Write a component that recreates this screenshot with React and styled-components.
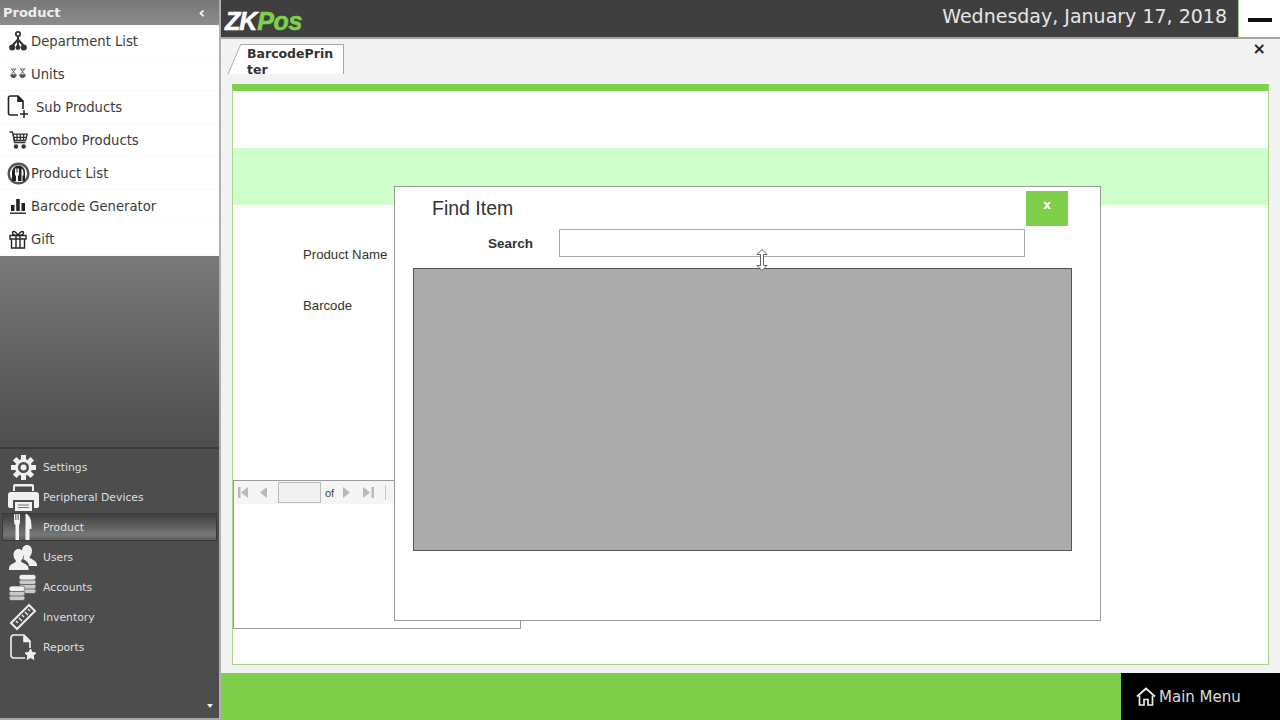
import React from 'react';
import styled, { createGlobalStyle } from 'styled-components';

const GlobalStyle = createGlobalStyle`
html, body { margin: 0; padding: 0; background: #f2f2f2; }
* { box-sizing: border-box; }
#root { width: 1280px; height: 720px; overflow: hidden; }
`;

const DeptIcon = () => (
    <svg width="18" height="22" viewBox="0 0 18 22" fill="none" stroke="#333" strokeWidth="1.7">
        <circle cx="9" cy="4" r="2.2" />
        <circle cx="3.2" cy="17.5" r="2.2" fill="#333" />
        <circle cx="14.8" cy="17.5" r="2.2" fill="#333" />
        <circle cx="9" cy="17.5" r="1.6" fill="#333" />
        <path d="M9 6v11M9 9.5L3.5 15.5M9 9.5l5.5 6" strokeWidth="2" />
    </svg>
);

const UnitsIcon = () => (
    <svg width="16" height="12" viewBox="0 0 16 12" fill="none" stroke="#555" strokeWidth=".9">
        <path d="M.8 1h5.400M1.500 1l3.800 5M5.500 1L1.700 6" />
        <path d="M9.800 1h5.400M10.500 1l3.800 5M14.500 1l-3.800 5" />
        <path d="M.7 6.800h5.600a2.800 2.800 0 0 1-5.600 0zM9.700 6.800h5.600a2.800 2.800 0 0 1-5.600 0z" fill="#555" />
    </svg>
);

const FilePlusIcon = () => (
    <svg width="22" height="24" viewBox="0 0 22 24" fill="none" stroke="#222" strokeWidth="1.6">
        <path d="M11 20H3.5Q1.5 20 1.5 18V3Q1.5 1 3.5 1H11l5 5v8" />
        <path d="M11 1.5V6.2h5" fill="#222" />
        <path d="M17 15v8M13 19h8" strokeWidth="1.5" />
    </svg>
);

const CartIcon = () => (
    <svg width="19" height="18" viewBox="0 0 19 18" fill="none" stroke="#333" strokeWidth="1.3">
        <path d="M.5 1h3l2.2 10.5h10.8" />
        <path d="M4.2 3.2h14l-1.6 6.3H5.4zM8 3.2v6.3M11.3 3.2v6.3M14.6 3.2v6.3M4.8 6.3h13" />
        <circle cx="7" cy="15.5" r="1.6" fill="#333" />
        <circle cx="14.6" cy="15.5" r="1.6" fill="#333" />
    </svg>
);

const PlateIcon = () => (
    <svg width="23" height="23" viewBox="0 0 23 23">
        <circle cx="11.5" cy="11.5" r="11" fill="#555" />
        <circle cx="11.5" cy="11.5" r="8.6" fill="#fff" />
        <path d="M5 10a6.5 6.5 0 0 1 13 0v9H5z" fill="#222" />
        <path d="M8 6.5v5.5q0 1.500 1 2v6h2v-6q1-.5 1-2V6.500h-.9v4h-.6v-4h-1v4h-.6v-4zM14.500 6.500q2 1 2 5v2h-1v6.500h-1z" fill="#fff" />
    </svg>
);

const BarsIcon = () => (
    <svg width="16" height="18" viewBox="0 0 16 18" fill="#222">
        <rect x="1" y="8" width="3.500" height="6" />
        <rect x="6.200" y="2" width="3.500" height="12" />
        <rect x="11.500" y="6" width="3.500" height="8" />
        <rect x="0" y="15.500" width="16" height="1.400" />
    </svg>
);

const GiftIcon = () => (
    <svg width="18" height="19" viewBox="0 0 18 19" fill="none" stroke="#222" strokeWidth="1.400">
        <rect x="1" y="5.500" width="16" height="3.500" />
        <path d="M2.500 9v9h13V9M7 5.500V18M11 5.500V18" />
        <path d="M9 5.500C7 1 3.500.5 3.500 3c0 1.500 2 2.500 5.500 2.500zM9 5.500C11 1 14.500.5 14.500 3c0 1.500-2 2.500-5.500 2.500z" />
    </svg>
);

const GearIcon = () => (
    <svg width="25" height="25" viewBox="0 0 25 25">
        <g fill="#f0f0f0">
            {[0, 45, 90, 135, 180, 225, 270, 315].map((a) => (
                <rect key={a} x="10" y="0" width="5" height="5" transform={`rotate(${a} 12.500 12.500)`} />
            ))}
        </g>
        <circle cx="12.500" cy="12.500" r="8.500" fill="#f0f0f0" />
        <circle cx="12.500" cy="12.500" r="5.500" fill="#4d4d4d" />
        <circle cx="12.500" cy="12.500" r="3" fill="#f0f0f0" />
    </svg>
);

const PrinterIcon = () => (
    <svg width="31" height="28" viewBox="0 0 31 28">
        <path d="M7 1h17q2 0 2 2v5h-2V3.500H7V8H5V3q0-2 2-2z" fill="#f0f0f0" />
        <path d="M3 9h25q3 0 3 3v11q0 2-2 2h-3v-8H5v8H2q-2 0-2-2V12q0-3 3-3z" fill="#f0f0f0" />
        <path d="M7 19h17v9H7z" fill="#f0f0f0" />
        <path d="M10 22h11M10 24.500h11" stroke="#777" strokeWidth="1.200" />
    </svg>
);

const CutleryIcon = () => (
    <svg width="18" height="28" viewBox="0 0 18 28" fill="#f4f4f4">
        <path d="M0 0h1.400v7h.9V0h1.400v7h.9V0H6v8q0 3-1 4v16H1.500V12Q0 11 0 8z" />
        <path d="M11.500 0q6 3 6 13v3h-2v12h-4z" />
    </svg>
);

const UsersIcon = () => (
    <svg width="28" height="25" viewBox="0 0 28 25" fill="#f0f0f0">
        <path d="M18 0c3 0 5 2.500 5 6 0 3-1.500 5-2.500 6 0 2 7.500 3 7.500 8v1h-8c0-3-2-5-6-7 .5-1 1-1 1-2.500C13 9 13 7 13 6c0-3.500 2-6 5-6z" />
        <path d="M9.500 4c3 0 5 2.500 5 6 0 3-1.500 4.500-2.500 6 0 2 7.500 3 7.500 7v2H0v-2c0-4 7-5 7-7-1-1.500-2.500-3-2.500-6 0-3.500 2-6 5-6z" />
    </svg>
);

const CoinsIcon = () => (
    <svg width="28" height="27" viewBox="0 0 28 27">
        <g fill="#c9c9c9" stroke="#4d4d4d" strokeWidth=".7">
            <rect x="10" y="14.500" width="17" height="5" rx="2.500" />
            <rect x="10" y="10" width="17" height="5" rx="2.500" />
            <rect x="10" y="5.500" width="17" height="5" rx="2.500" />
            <rect x="10" y=".5" width="17" height="5.500" rx="2.700" fill="#f0f0f0" />
            <rect x="0" y="21.500" width="16" height="5" rx="2.500" />
            <rect x="0" y="17" width="16" height="5" rx="2.500" />
            <rect x="0" y="12" width="16" height="5.500" rx="2.700" fill="#f0f0f0" />
        </g>
    </svg>
);

const RulerIcon = () => (
    <svg width="28" height="28" viewBox="0 0 28 28" fill="none" stroke="#eee">
        <path d="M2 20L20 2l6 6L8 26z" strokeWidth="2" />
        <path d="M7 18l2 2M10 15l3 3M13 12l2 2M16 9l3 3M19 6l2 2" strokeWidth="1.400" />
    </svg>
);

const ReportIcon = () => (
    <svg width="27" height="27" viewBox="0 0 27 27" fill="none" stroke="#f0f0f0" strokeWidth="1.600">
        <path d="M15 24H4q-3 0-3-3V4q0-3 3-3h10l6 6v7" />
        <path d="M14 1.500V7.500h6" fill="#f0f0f0" />
        <path d="M20.500 15l1.700 3.500 3.800.5-2.800 2.600.7 3.800-3.400-1.800-3.400 1.800.7-3.800L15 19l3.800-.5z" fill="#f0f0f0" strokeWidth="1" />
    </svg>
);

const HomeIcon = () => (
    <svg width="20" height="19" viewBox="0 0 20 19" fill="none" stroke="#eee" strokeWidth="1.700">
        <path d="M1 9.500L10 1.500l9 8" />
        <path d="M3.500 8.500V18h4.500v-5.500h4V18h4.500V8.500" />
    </svg>
);

const CursorIcon = () => (
    <svg width="12" height="22" viewBox="0 0 12 22" fill="#fff" stroke="#555" strokeWidth=".9">
        <path d="M6 .5L11 5.500H7.500v11H11L6 21.500 1 16.500h3.500v-11H1z" />
    </svg>
);

const FirstIcon = () => (
    <svg width="11" height="11" viewBox="0 0 11 11" fill="#b9b9b9"><rect x="0" y="0" width="2.500" height="11" /><path d="M10 0v11L3 5.500z" /></svg>
);
const PrevIcon = () => (
    <svg width="7" height="11" viewBox="0 0 7 11" fill="#b9b9b9"><path d="M7 0v11L0 5.500z" /></svg>
);
const NextIcon = () => (
    <svg width="7" height="11" viewBox="0 0 7 11" fill="#b9b9b9"><path d="M0 0v11l7-5.500z" /></svg>
);
const LastIcon = () => (
    <svg width="11" height="11" viewBox="0 0 11 11" fill="#b9b9b9"><path d="M0 0v11l7-5.500z" /><rect x="8.500" y="0" width="2.500" height="11" /></svg>
);

const productItems = [
    { label: 'Department List', icon: <DeptIcon /> },
    { label: 'Units', icon: <UnitsIcon /> },
    { label: 'Sub Products', icon: <FilePlusIcon />, wide: true },
    { label: 'Combo Products', icon: <CartIcon /> },
    { label: 'Product List', icon: <PlateIcon /> },
    { label: 'Barcode Generator', icon: <BarsIcon /> },
    { label: 'Gift', icon: <GiftIcon /> },
];

const navItems = [
    { label: 'Settings', icon: <GearIcon /> },
    { label: 'Peripheral Devices', icon: <PrinterIcon /> },
    { label: 'Product', icon: <CutleryIcon />, active: true },
    { label: 'Users', icon: <UsersIcon /> },
    { label: 'Accounts', icon: <CoinsIcon /> },
    { label: 'Inventory', icon: <RulerIcon /> },
    { label: 'Reports', icon: <ReportIcon /> },
];

const App = () => (
    <Page>
        <GlobalStyle />
        <Sidebar>
            <SideHeader>
                <span>Product</span>
                <Collapse>‹</Collapse>
            </SideHeader>
            <ProductList>
                {productItems.map((item) => (
                    <ProductRow key={item.label}>
                        <ProductIcon>{item.icon}</ProductIcon>
                        <ProductLabel $wide={item.wide}>{item.label}</ProductLabel>
                    </ProductRow>
                ))}
            </ProductList>
            <DarkPanel>
                <NavList>
                    {navItems.map((item) => (
                        <NavRow key={item.label} $active={item.active}>
                            <NavIcon>{item.icon}</NavIcon>
                            <span>{item.label}</span>
                        </NavRow>
                    ))}
                </NavList>
                <ScrollDown />
            </DarkPanel>
        </Sidebar>
        <Main>
            <TopBar>
                <Logo>ZK<LogoAccent>Pos</LogoAccent></Logo>
                <DateText>Wednesday, January 17, 2018</DateText>
                <MinimizeButton><MinimizeBar /></MinimizeButton>
            </TopBar>
            <Workspace>
                <TabStrip>
                    <Tab><TabText>BarcodePrinter</TabText></Tab>
                    <CloseTab>×</CloseTab>
                </TabStrip>
                <Panel>
                    <Band />
                    <FormArea>
                        <FieldLabel>Product Name</FieldLabel>
                        <FieldLabel>Barcode</FieldLabel>
                    </FormArea>
                    <Viewer>
                        <ViewerToolbar>
                            <FirstIcon />
                            <PrevIcon />
                            <PageInput />
                            <OfText>of</OfText>
                            <NextIcon />
                            <PagerEnd><LastIcon /></PagerEnd>
                            <ToolSep />
                        </ViewerToolbar>
                    </Viewer>
                </Panel>
            </Workspace>
            <Footer>
                <MainMenuButton>
                    <HomeIcon />
                    Main Menu
                </MainMenuButton>
            </Footer>
        </Main>
        <Modal>
            <ModalHeader>
                <ModalTitle>Find Item</ModalTitle>
                <ModalClose>x</ModalClose>
            </ModalHeader>
            <SearchRow>
                <SearchLabel>Search</SearchLabel>
                <SearchInput />
            </SearchRow>
            <ResultGrid />
        </Modal>
        <Cursor><CursorIcon /></Cursor>
    </Page>
);

const Page = styled.div`
position: relative;
display: flex;
width: 1280px;
height: 720px;
overflow: hidden;
background: #f2f2f2;
`;

const Sidebar = styled.aside`
display: flex;
flex-direction: column;
width: 221px;
flex-shrink: 0;
background: #fff;
border-right: 2px solid #b0b0b0;
`;

const SideHeader = styled.div`
display: flex;
align-items: center;
justify-content: space-between;
height: 25px;
padding: 0 14px 0 3px;
background: linear-gradient(#777, #8c8c8c);
color: #eee;
font: bold 13px "DejaVu Sans", sans-serif;
`;

const Collapse = styled.span`
font-size: 16px;
line-height: 1;
color: #fff;
`;

const ProductList = styled.div`
display: flex;
flex-direction: column;
`;

const ProductRow = styled.div`
display: flex;
align-items: center;
height: 33px;
padding-left: 5px;
border-bottom: 1px solid #fafafa;
`;

const ProductIcon = styled.span`
display: flex;
align-items: center;
justify-content: center;
width: 26px;
flex-shrink: 0;
`;

const ProductLabel = styled.span`
margin-left: ${(p) => (p.$wide ? '5px' : '0')};
color: #3c3c3c;
font: 13.2px "DejaVu Sans", sans-serif;
`;

const DarkPanel = styled.div`
display: flex;
flex-direction: column;
justify-content: flex-end;
flex: 1;
background: linear-gradient(#7a7a7a 0, #4d4d4d 42%);
border-bottom: 2px solid #a5a5a5;
`;

const NavList = styled.div`
display: flex;
flex-direction: column;
padding-top: 3px;
margin-bottom: 42px;
border-top: 2px solid #3c3c3c;
`;

const NavRow = styled.div`
display: flex;
align-items: center;
height: ${(p) => (p.$active ? '26px' : '30px')};
margin: ${(p) => (p.$active ? '2px 3px' : '0 3px')};
color: #ddd;
font: 10.8px "DejaVu Sans", sans-serif;
background: ${(p) => (p.$active ? 'linear-gradient(#3f3f3f, #5e5e5e 45%, #777 80%, #5a5a5a)' : 'none')};
outline: ${(p) => (p.$active ? '1px solid #3a3a3a' : 'none')};
`;

const NavIcon = styled.span`
display: flex;
align-items: center;
justify-content: center;
width: 40px;
height: 26px;
flex-shrink: 0;
`;

const ScrollDown = styled.div`
align-self: flex-end;
width: 0;
height: 0;
margin: 0 6px 10px 0;
border-left: 3px solid transparent;
border-right: 3px solid transparent;
border-top: 4px solid #eee;
`;

const Main = styled.main`
display: flex;
flex-direction: column;
flex: 1;
min-width: 0;
`;

const TopBar = styled.header`
display: flex;
align-items: center;
height: 39px;
flex-shrink: 0;
padding-left: 4px;
background: #3f3f3f;
border-bottom: 2px solid #a5a5a5;
`;

const Logo = styled.div`
margin-top: 5px;
color: #fff;
font: italic 900 25px "Liberation Sans", sans-serif;
letter-spacing: -1px;
-webkit-text-stroke: 0.6px currentColor;
`;

const LogoAccent = styled.span`
margin-left: 1px;
color: #7ed04b;
letter-spacing: -0.4px;
`;

const DateText = styled.div`
margin: 0 11px 6px auto;
color: #e6e6e6;
font: 19px "DejaVu Sans", sans-serif;
`;

const MinimizeButton = styled.div`
display: flex;
align-items: center;
justify-content: center;
width: 42px;
height: 37px;
background: #fff;
border-left: 1px solid #a8c98e;
`;

const MinimizeBar = styled.div`
width: 24px;
height: 4px;
margin-top: 2px;
background: #111;
`;

const Workspace = styled.div`
display: flex;
flex-direction: column;
flex: 1;
padding: 5px 11px 8px 11px;
min-height: 0;
`;

const TabStrip = styled.div`
display: flex;
justify-content: space-between;
height: 40px;
flex-shrink: 0;
`;

const Tab = styled.div`
position: relative;
width: 102px;
height: 30px;
margin-left: 10px;
background: #fff;
border-top: 1px solid #a9a9a9;
border-right: 1px solid #a9a9a9;
&::before {
    content: '';
    position: absolute;
    left: -8px;
    top: -1px;
    bottom: 0;
    width: 16px;
    background: #fff;
    border-left: 1px solid #a9a9a9;
    border-top: 1px solid #a9a9a9;
    transform: skewX(-23deg);
}
`;

const TabText = styled.div`
position: relative;
padding: 1px 6px 0 5px;
color: #333;
font: bold 12.5px/16px "DejaVu Sans", sans-serif;
word-break: break-all;
`;

const CloseTab = styled.div`
margin: -3px 3px 0 0;
color: #222;
font: bold 16px/16px "DejaVu Sans", sans-serif;
`;

const Panel = styled.section`
display: flex;
flex-direction: column;
flex: 1;
min-height: 0;
padding-top: 57px;
background: #fff;
border: 1px solid #a9d48c;
border-top: 7px solid #7ed04b;
`;

const Band = styled.div`
height: 57px;
flex-shrink: 0;
background: #ceffca;
`;

const FormArea = styled.div`
display: flex;
flex-direction: column;
gap: 35px;
height: 275px;
flex-shrink: 0;
padding: 42px 0 0 70px;
`;

const FieldLabel = styled.div`
color: #333;
font: 13.2px/16px "Liberation Sans", sans-serif;
`;

const Viewer = styled.div`
width: 288px;
height: 149px;
background: #fff;
border: 1px solid #9c9c9c;
`;

const ViewerToolbar = styled.div`
display: flex;
align-items: center;
gap: 11px;
height: 23px;
padding-left: 4px;
background: #f5f5f5;
`;

const PageInput = styled.div`
width: 43px;
height: 21px;
background: #f1f1f1;
border: 1px solid #bbb;
`;

const OfText = styled.span`
margin: 0 -2px 0 -7px;
color: #444;
font: 11px "Liberation Sans", sans-serif;
`;

const PagerEnd = styled.span`
display: flex;
margin-left: 2px;
`;

const ToolSep = styled.div`
width: 1px;
height: 15px;
background: #c8c8c8;
`;

const Footer = styled.footer`
display: flex;
justify-content: flex-end;
height: 47px;
flex-shrink: 0;
background: #7ed04b;
`;

const MainMenuButton = styled.div`
display: flex;
align-items: center;
gap: 3px;
width: 159px;
padding-left: 15px;
background: #000;
color: #ddd;
font: 15px "DejaVu Sans", sans-serif;
`;

const Modal = styled.div`
position: absolute;
left: 394px;
top: 186px;
display: flex;
flex-direction: column;
width: 707px;
height: 435px;
padding: 4px 32px 0 18px;
background: #fff;
border: 1px solid #999;
`;

const ModalHeader = styled.div`
display: flex;
align-items: center;
justify-content: space-between;
height: 35px;
padding-left: 19px;
`;

const ModalTitle = styled.div`
color: #333;
font: 19.5px "Liberation Sans", sans-serif;
`;

const ModalClose = styled.div`
display: flex;
justify-content: center;
width: 42px;
height: 35px;
padding-top: 6px;
background: #7ed04b;
color: #fff;
font: bold 12px/16px "DejaVu Sans", sans-serif;
`;

const SearchRow = styled.div`
display: flex;
align-items: center;
gap: 25px;
height: 28px;
margin-top: 3px;
padding-left: 75px;
`;

const SearchLabel = styled.div`
width: 46px;
color: #333;
font: bold 13.5px "Liberation Sans", sans-serif;
white-space: nowrap;
`;

const SearchInput = styled.div`
width: 466px;
height: 28px;
background: #fff;
border: 1px solid #aaa;
`;

const ResultGrid = styled.div`
width: 659px;
height: 283px;
margin-top: 11px;
background: #ababab;
border: 1px solid #555;
`;

const Cursor = styled.div`
position: absolute;
left: 756px;
top: 249px;
line-height: 0;
`;

export default App;
